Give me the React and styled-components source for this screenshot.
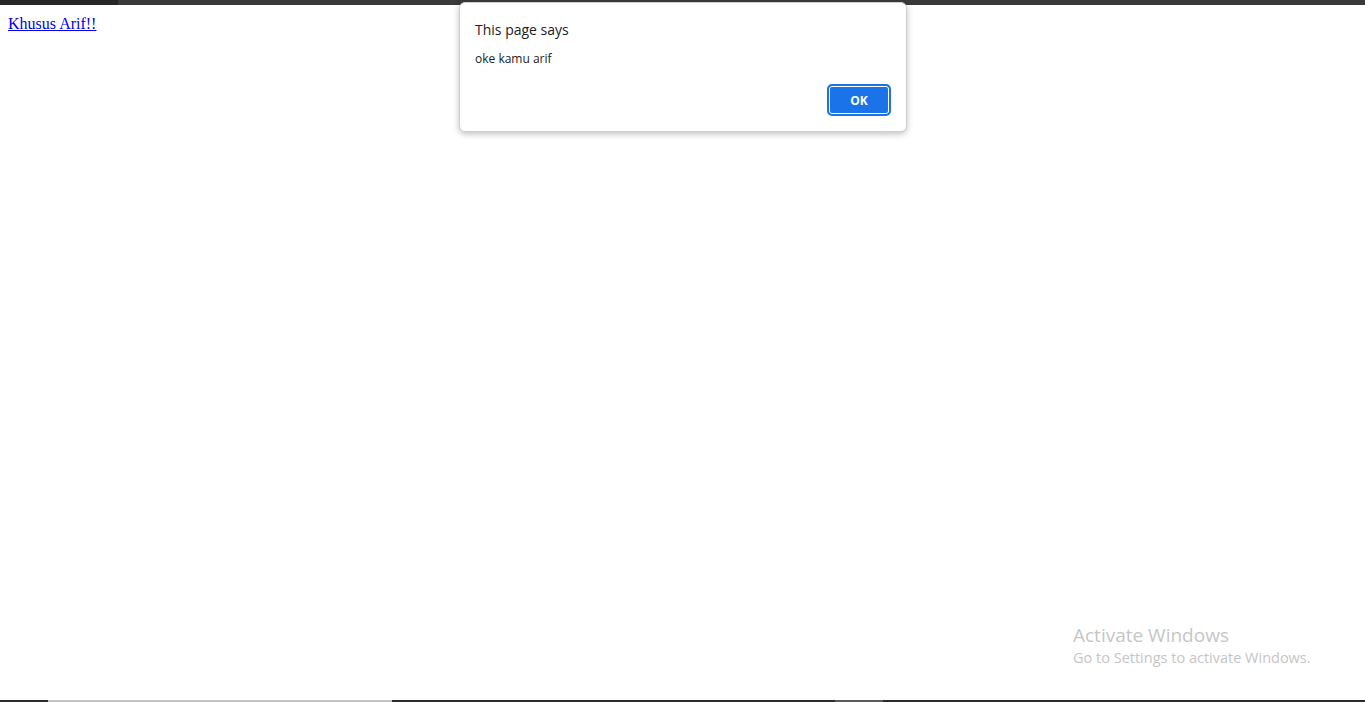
import styled, { createGlobalStyle } from "styled-components";

const GlobalStyle = createGlobalStyle`
  html, body {
    margin: 0;
    padding: 0;
    background: #ffffff;
  }
`;

const App = () => {
  return (
    <>
      <GlobalStyle />
      <Screen>
        <TopBar>
          <TopTab />
        </TopBar>
        <Page>
          <LinkText href="#">Khusus Arif!!</LinkText>
        </Page>
        <BottomBar>
          <Segment $w="48px" $c="#2b2b2b" />
          <Segment $w="344px" $c="#c4c4c4" />
          <Segment $w="443px" $c="#2b2b2b" />
          <Segment $w="48px" $c="#5a5a5a" />
          <Segment $w="auto" $c="#2b2b2b" $grow />
        </BottomBar>

        <Dialog role="alertdialog">
          <DialogTitle>This page says</DialogTitle>
          <DialogMessage>oke kamu arif</DialogMessage>
          <DialogActions>
            <OkButton>OK</OkButton>
          </DialogActions>
        </Dialog>

        <Watermark>
          <WatermarkTitle>Activate Windows</WatermarkTitle>
          <WatermarkText>Go to Settings to activate Windows.</WatermarkText>
        </Watermark>
      </Screen>
    </>
  );
};

export default App;

const Screen = styled.div`
  position: relative;
  display: flex;
  flex-direction: column;
  height: 100vh;
  overflow: hidden;
`;

const TopBar = styled.div`
  display: flex;
  height: 5px;
  background: #3a3a3a;
  flex: none;
`;

const TopTab = styled.div`
  width: 118px;
  background: #262626;
`;

const Page = styled.main`
  flex: 1;
  padding: 10px 8px 8px;
  font-family: "Liberation Serif", "Times New Roman", serif;
  font-size: 16px;
`;

const LinkText = styled.a`
  color: #0000ee;
  text-decoration: underline;
`;

const BottomBar = styled.div`
  display: flex;
  height: 2px;
  flex: none;
`;

const Segment = styled.div`
  width: ${(p) => p.$w};
  flex: ${(p) => (p.$grow ? 1 : "none")};
  background: ${(p) => p.$c};
`;

const Dialog = styled.div`
  position: absolute;
  top: 2px;
  left: 459px;
  width: 448px;
  height: 130px;
  box-sizing: border-box;
  padding: 16px 15px 15px 16px;
  background: #ffffff;
  border: 1px solid #cfcfcf;
  border-radius: 6px;
  box-shadow: 0 2px 6px rgba(0, 0, 0, 0.25);
  display: flex;
  flex-direction: column;
  font-family: "Open Sans", "Noto Sans", sans-serif;
  color: #202124;
`;

const DialogTitle = styled.div`
  font-size: 14px;
  line-height: 22px;
  margin-left: -1px;
`;

const DialogMessage = styled.div`
  margin-top: 10px;
  margin-left: -1px;
  font-size: 12px;
  line-height: 16px;
`;

const DialogActions = styled.div`
  margin-top: auto;
  display: flex;
  justify-content: flex-end;
`;

const OkButton = styled.button`
  width: 64px;
  height: 32px;
  box-sizing: border-box;
  border: 2px solid #1a73e8;
  box-shadow: inset 0 0 0 1px #ffffff;
  outline: none;
  border-radius: 5px;
  background: #1a73e8;
  color: #ffffff;
  font-family: "Open Sans", "Noto Sans", sans-serif;
  font-size: 12px;
  font-weight: 700;
  cursor: pointer;
`;

const Watermark = styled.div`
  position: absolute;
  left: 1073px;
  top: 623px;
  font-family: "Open Sans", "Noto Sans", sans-serif;
  color: #c6c6c6;
  pointer-events: none;
`;

const WatermarkTitle = styled.div`
  font-size: 19px;
  line-height: 25px;
`;

const WatermarkText = styled.div`
  font-size: 14.5px;
  line-height: 20px;
`;
